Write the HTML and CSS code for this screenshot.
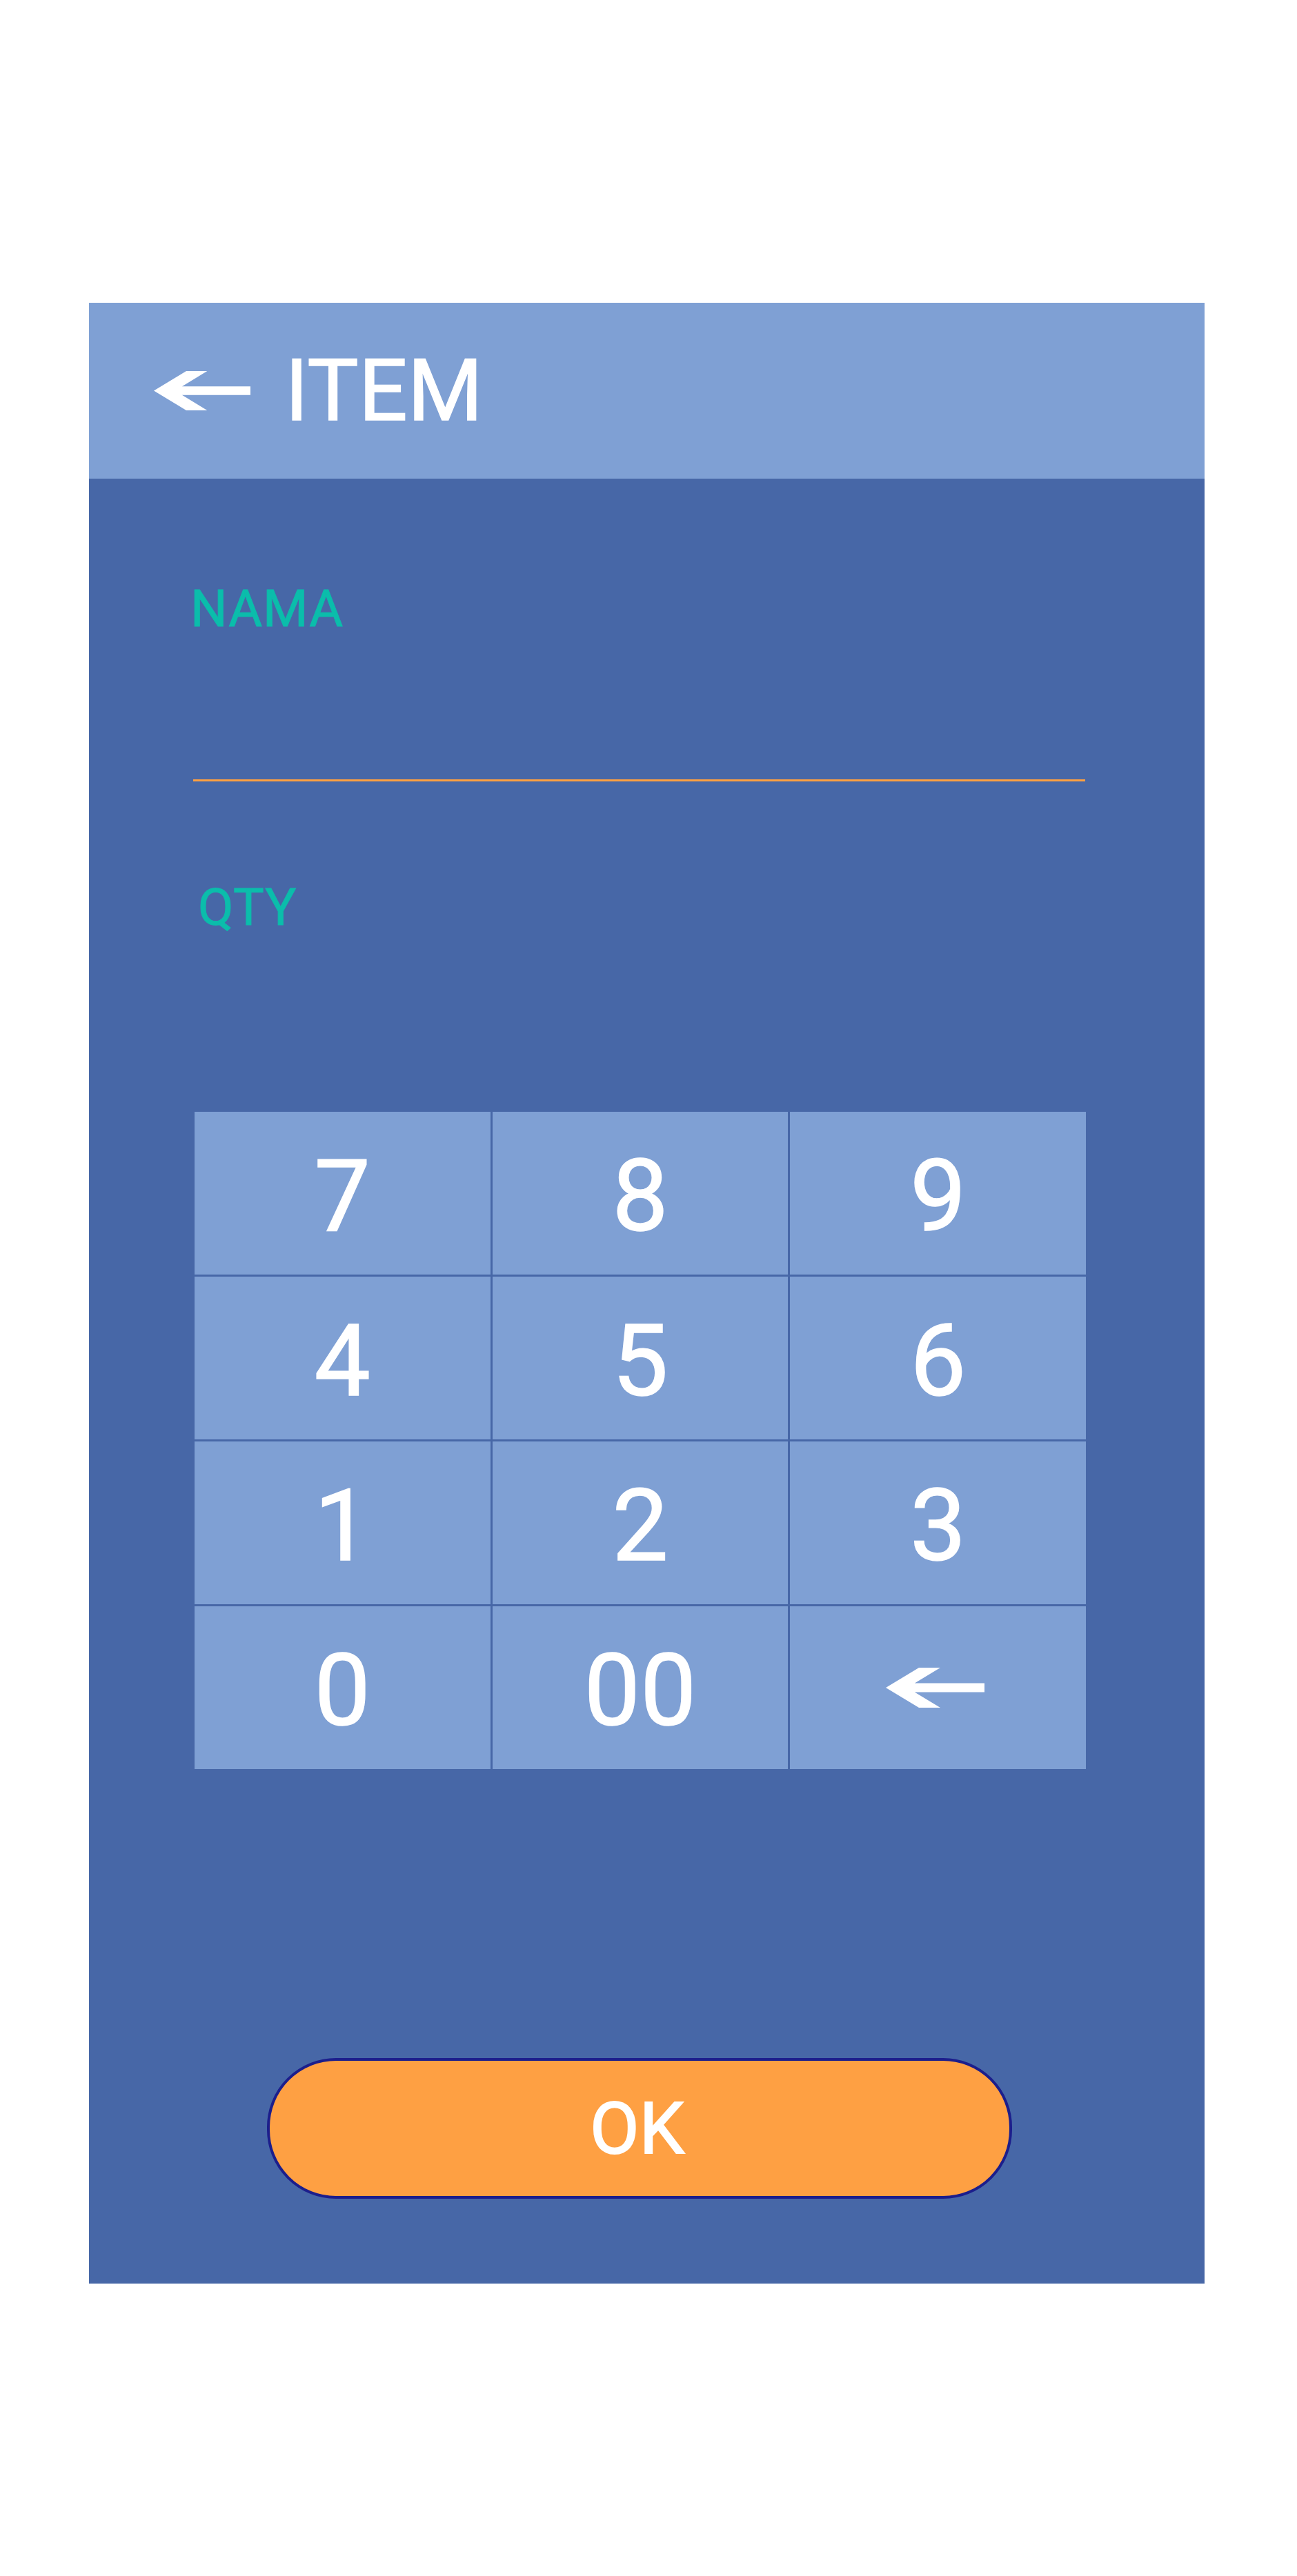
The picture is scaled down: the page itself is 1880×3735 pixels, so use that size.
FILE: index.html
```html
<!DOCTYPE html>
<html lang="id">
<head>
<meta charset="utf-8">
<title>ITEM</title>
<link rel="stylesheet" href="styles.css">
</head>
<body>
<div class="screen">
  <header class="appbar">
    <svg class="back" viewBox="0 0 143 58" aria-hidden="true"><polygon points="0,29 48,0 79,0 41.8,22.5 143,22.5 143,35.5 41.8,35.5 79,58 48,58"/></svg>
    <h1 class="title">ITEM</h1>
  </header>
  <main class="content">
    <div class="field">
      <label class="label label-nama">NAMA</label>
      <div class="input"></div>
    </div>
    <div class="field field-qty">
      <label class="label label-qty">QTY</label>
    </div>
    <div class="keypad">
      <div class="key">7</div>
      <div class="key">8</div>
      <div class="key">9</div>
      <div class="key">4</div>
      <div class="key">5</div>
      <div class="key">6</div>
      <div class="key">1</div>
      <div class="key">2</div>
      <div class="key">3</div>
      <div class="key">0</div>
      <div class="key">00</div>
      <div class="key key-back"><svg class="bksp" viewBox="0 0 143 58" aria-hidden="true"><polygon points="0,29 48,0 79,0 41.8,22.5 143,22.5 143,35.5 41.8,35.5 79,58 48,58"/></svg></div>
    </div>
    <div class="ok">OK</div>
  </main>
</div>
</body>
</html>
```

FILE: styles.css
```css
html, body {
  margin: 0;
  padding: 0;
  background: #ffffff;
  font-family: Roboto, "Liberation Sans", sans-serif;
}

.screen {
  margin: 439px 0 0 129px;
  width: 1617px;
  background: #4767a7;
}

.appbar {
  height: 255px;
  background: #7fa0d4;
  display: flex;
  align-items: center;
  padding-left: 94px;
  box-sizing: border-box;
}

.back {
  width: 140px;
  height: 57px;
  fill: #ffffff;
  flex: none;
}

.title {
  margin: 0 0 0 50px;
  font-weight: 400;
  font-size: 125px;
  line-height: 1;
  color: #ffffff;
  -webkit-text-stroke: 1.5px #ffffff;
}

.content {
  padding: 144px 172px 123px 151px;
}

.label {
  display: block;
  font-size: 75px;
  line-height: 88px;
  color: #0bbdab;
  letter-spacing: 1px;
  -webkit-text-stroke: 1px #0bbdab;
}

.label-nama {
  margin-left: -4px;
}

.input {
  height: 204px;
  border-bottom: 3px solid #ffa040;
  margin-right: 1px;
}

.field-qty {
  margin-top: 138px;
}

.label-qty {
  margin-left: 7px;
}

.keypad {
  margin: 253px 0 0 2px;
  width: 1292px;
  display: grid;
  grid-template-columns: repeat(3, 1fr);
  grid-auto-rows: 236px;
  gap: 3px;
}

.key {
  background: #7fa0d4;
  color: #ffffff;
  font-size: 145px;
  line-height: 1;
  display: flex;
  align-items: center;
  justify-content: center;
  padding-top: 8px;
  box-sizing: border-box;
  -webkit-text-stroke: 1.5px #ffffff;
}

.key-back {
  padding: 0 8px 0 0;
}

.bksp {
  width: 143px;
  height: 58px;
  fill: #ffffff;
}

.ok {
  margin: 419px auto 0;
  width: 1080px;
  height: 204px;
  box-sizing: border-box;
  border: 4px solid #1c1e8c;
  border-radius: 100px;
  background: #fea043;
  color: #ffffff;
  font-size: 104px;
  display: flex;
  align-items: center;
  justify-content: center;
  padding-right: 7px;
  -webkit-text-stroke: 2px #ffffff;
}
```
